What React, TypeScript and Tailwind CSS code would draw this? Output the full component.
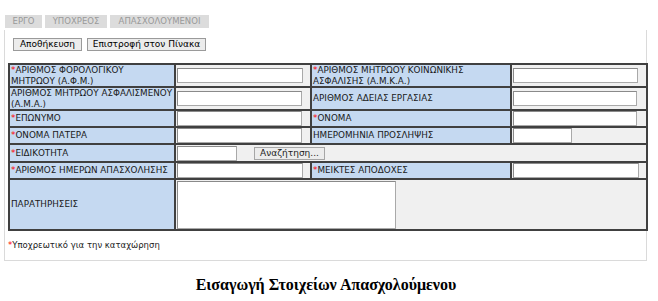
import React from "react";

const Req = () => <span className="text-[#ff0000]">*</span>;

const Input = ({ w }: { w: string }) => (
  <input
    type="text"
    className={`${w} h-[15px] bg-white border border-[#a9a9a9] border-t-[#8a8a8a] border-l-[#8a8a8a] outline-none block`}
  />
);

const lbl =
  "bg-[#c5d9f1] border-2 border-[#404040] pl-[1px] pr-0 align-middle text-[8.8px] leading-[10.5px] text-[#1a1a1a] whitespace-nowrap overflow-hidden";
const inp = "bg-[#f0f0f0] border-2 border-[#404040] px-[1px] align-middle";

export default function App() {
  return (
    <div
      className="w-[658px] h-[301px] bg-white"
      style={{ fontFamily: '"DejaVu Sans", Verdana, sans-serif' }}
    >
      <div className="pt-[15px] pl-[5px] flex gap-[3px]">
        {["ΕΡΓΟ", "ΥΠΟΧΡΕΟΣ", "ΑΠΑΣΧΟΛΟΥΜΕΝΟΙ"].map((t, i) => (
          <div
            key={t}
            className={`h-[13px] bg-[#dcdcdc] text-[#999999] text-[8.5px] leading-[13px] flex items-center justify-center ${
              i === 0 ? "w-[37px]" : i === 1 ? "w-[62px]" : "w-[99px]"
            }`}
          >
            {t}
          </div>
        ))}
      </div>
      <div className="ml-[4px] mt-[2px] w-[643px] border-l border-r border-b border-[#dadada] pl-[3px] pt-[8px] pb-[10px]">
        <div className="flex gap-[5px] pl-[5px]">
          <button className="h-[13px] w-[69px] bg-[#ececec] border border-[#9a9a9a] text-[9px] leading-[11px] text-black">
            Αποθήκευση
          </button>
          <button className="h-[13px] w-[119px] bg-[#ececec] border border-[#9a9a9a] text-[9px] leading-[11px] text-black">
            Επιστροφή στον Πίνακα
          </button>
        </div>
        <table className="mt-[12px] w-[638px] table-fixed border-collapse">
          <colgroup>
            <col className="w-[166px]" />
            <col className="w-[136px]" />
            <col className="w-[200px]" />
            <col className="w-[136px]" />
          </colgroup>
          <tbody>
            <tr className="h-[22px]">
              <td className={lbl}>
                <Req />
                ΑΡΙΘΜΟΣ ΦΟΡΟΛΟΓΙΚΟΥ
                <br />
                ΜΗΤΡΩΟΥ (Α.Φ.Μ.)
              </td>
              <td className={inp}>
                <Input w="w-[126px]" />
              </td>
              <td className={lbl}>
                <Req />
                ΑΡΙΘΜΟΣ ΜΗΤΡΩΟΥ ΚΟΙΝΩΝΙΚΗΣ
                <br />
                ΑΣΦΑΛΙΣΗΣ (Α.Μ.Κ.Α.)
              </td>
              <td className={inp}>
                <Input w="w-[125px]" />
              </td>
            </tr>
            <tr className="h-[22px]">
              <td className={lbl}>
                ΑΡΙΘΜΟΣ ΜΗΤΡΩΟΥ ΑΣΦΑΛΙΣΜΕΝΟΥ
                <br />
                (Α.Μ.Α.)
              </td>
              <td className={inp}>
                <Input w="w-[125px]" />
              </td>
              <td className={lbl}>ΑΡΙΘΜΟΣ ΑΔΕΙΑΣ ΕΡΓΑΣΙΑΣ</td>
              <td className={inp}>
                <Input w="w-[124px]" />
              </td>
            </tr>
            <tr className="h-[17px]">
              <td className={lbl}>
                <Req />
                ΕΠΩΝΥΜΟ
              </td>
              <td className={inp}>
                <Input w="w-[125px]" />
              </td>
              <td className={lbl}>
                <Req />
                ΟΝΟΜΑ
              </td>
              <td className={inp}>
                <Input w="w-[124px]" />
              </td>
            </tr>
            <tr className="h-[17px]">
              <td className={lbl}>
                <Req />
                ΟΝΟΜΑ ΠΑΤΕΡΑ
              </td>
              <td className={inp}>
                <Input w="w-[125px]" />
              </td>
              <td className={lbl}>ΗΜΕΡΟΜΗΝΙΑ ΠΡΟΣΛΗΨΗΣ</td>
              <td className={inp}>
                <Input w="w-[59px]" />
              </td>
            </tr>
            <tr className="h-[18px]">
              <td className={lbl}>
                <Req />
                ΕΙΔΙΚΟΤΗΤΑ
              </td>
              <td className={inp} colSpan={3}>
                <div className="flex items-center">
                  <Input w="w-[60px]" />
                  <button className="ml-[17px] h-[13px] w-[71px] bg-[#ececec] border border-[#a6a6a6] text-[9px] leading-[11px] text-[#222]">
                    Αναζήτηση...
                  </button>
                </div>
              </td>
            </tr>
            <tr className="h-[17px]">
              <td className={lbl}>
                <Req />
                ΑΡΙΘΜΟΣ ΗΜΕΡΩΝ ΑΠΑΣΧΟΛΗΣΗΣ
              </td>
              <td className={inp}>
                <Input w="w-[126px]" />
              </td>
              <td className={lbl}>
                <Req />
                ΜΕΙΚΤΕΣ ΑΠΟΔΟΧΕΣ
              </td>
              <td className={inp}>
                <Input w="w-[126px]" />
              </td>
            </tr>
            <tr className="h-[51px]">
              <td className={lbl}>ΠΑΡΑΤΗΡΗΣΕΙΣ</td>
              <td className={inp} colSpan={3}>
                <textarea className="block w-[219px] h-[48px] bg-white border border-[#a9a9a9] border-t-[#8a8a8a] border-l-[#8a8a8a] outline-none resize-none" />
              </td>
            </tr>
          </tbody>
        </table>
        <div className="mt-[9px] text-[8.5px] leading-[10px] text-[#222]">
          <Req />
          Υποχρεωτικό για την καταχώρηση
        </div>
      </div>
      <div
        className="mt-[15px] text-center text-[16px] font-bold leading-[18px] text-black pr-[6px]"
        style={{ fontFamily: '"Liberation Serif", "Times New Roman", serif' }}
      >
        Εισαγωγή Στοιχείων Απασχολούμενου
      </div>
    </div>
  );
}
